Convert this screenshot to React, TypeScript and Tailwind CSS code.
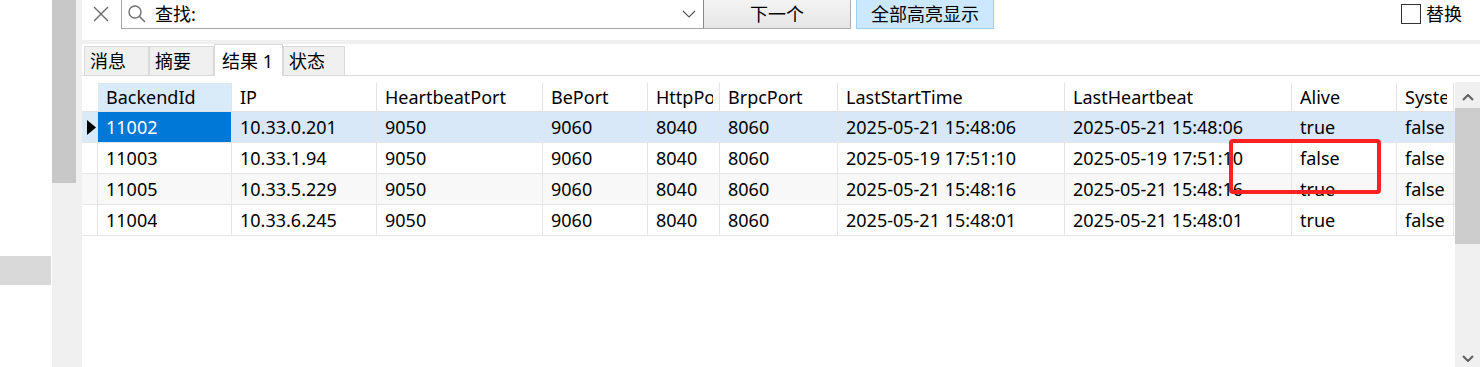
import React from 'react';

const cols = [
  { name: 'BackendId', w: 'w-[134px]' },
  { name: 'IP', w: 'w-[145px]' },
  { name: 'HeartbeatPort', w: 'w-[166px]' },
  { name: 'BePort', w: 'w-[105px]' },
  { name: 'HttpPort', w: 'w-[72px]' },
  { name: 'BrpcPort', w: 'w-[118px]' },
  { name: 'LastStartTime', w: 'w-[227px]' },
  { name: 'LastHeartbeat', w: 'w-[227px]' },
  { name: 'Alive', w: 'w-[105px]' },
  { name: 'SystemDecommissioned', w: 'w-[57px]' },
];

const rows = [
  ['11002', '10.33.0.201', '9050', '9060', '8040', '8060', '2025-05-21 15:48:06', '2025-05-21 15:48:06', 'true', 'false'],
  ['11003', '10.33.1.94', '9050', '9060', '8040', '8060', '2025-05-19 17:51:10', '2025-05-19 17:51:10', 'false', 'false'],
  ['11005', '10.33.5.229', '9050', '9060', '8040', '8060', '2025-05-21 15:48:16', '2025-05-21 15:48:16', 'true', 'false'],
  ['11004', '10.33.6.245', '9050', '9060', '8040', '8060', '2025-05-21 15:48:01', '2025-05-21 15:48:01', 'true', 'false'],
];

const tabs = [
  { label: '消息', w: 'w-[65px]' },
  { label: '摘要', w: 'w-[65px]' },
  { label: '结果 1', w: 'w-[69px]', active: true },
  { label: '状态', w: 'w-[62px]' },
];

export default function App() {
  return (
    <div className="relative flex h-[367px] w-[1480px] overflow-hidden bg-white font-['Noto_Sans','Noto_Sans_CJK_SC',sans-serif] text-[18px] text-black">
      {/* left blank column */}
      <div className="w-[52px] shrink-0">
        <div className="mt-[256px] h-[29px] w-[51px] bg-[#d9d9d9]" />
      </div>
      {/* left scroll strip */}
      <div className="w-[30px] shrink-0 bg-[#f0f0f0]">
        <div className="h-[183px] w-[24px] bg-[#c8c8c8]" />
      </div>

      {/* main */}
      <div className="flex min-w-0 flex-1 flex-col">
        {/* toolbar */}
        <div className="flex h-[40px] shrink-0 items-start">
          <div className="flex h-[28px] w-[39px] items-center pl-[11px]">
            <svg width="16" height="16" viewBox="0 0 16 16">
              <path d="M1 1 L15 15 M15 1 L1 15" stroke="#6b6b6b" strokeWidth="1.4" fill="none" />
            </svg>
          </div>
          <div className="flex h-[29px] w-[582px] items-center border-b border-l border-[#a6a6a6]">
            <svg width="20" height="20" viewBox="0 0 20 20" className="ml-[5px]">
              <circle cx="8" cy="8" r="6" stroke="#707070" strokeWidth="1.4" fill="none" />
              <path d="M12.3 12.3 L18 18" stroke="#707070" strokeWidth="1.6" fill="none" />
            </svg>
            <span className="ml-[8px] leading-[24px]">查找:</span>
            <div className="flex-1" />
            <svg width="14" height="8" viewBox="0 0 14 8" className="mr-[7px]">
              <path d="M1 1 L7 7 L13 1" stroke="#555" strokeWidth="1.1" fill="none" />
            </svg>
          </div>
          <div className="flex h-[29px] w-[148px] items-center justify-center border-x border-b border-x-[#8a8a8a] border-r-[#adadad] border-b-[#adadad] bg-linear-to-b from-[#f4f4f4] to-[#e6e6e6] leading-[24px]">
            下一个
          </div>
          <div className="ml-[5px] flex h-[29px] w-[138px] items-center justify-center border-x border-b border-[#99d1ff] bg-[#cce8ff] leading-[24px]">
            全部高亮显示
          </div>
          <div className="flex-1" />
          <div className="mr-[18px] mt-[3px] flex items-center">
            <div className="h-[20px] w-[20px] border border-[#333]" />
            <span className="ml-[5px] leading-[22px]">替换</span>
          </div>
        </div>
        <div className="h-[4px] shrink-0 bg-[#f0f0f0]" />

        {/* tabs */}
        <div className="flex h-[32px] shrink-0 items-end border-b border-[#d9d9d9] pl-[2px]">
          {tabs.map((t) =>
            t.active ? (
              <div
                key={t.label}
                className={`${t.w} -mb-px flex h-[32px] items-center border-x border-t border-[#d9d9d9] bg-white pl-[7px] leading-[24px]`}
              >
                {t.label}
              </div>
            ) : (
              <div
                key={t.label}
                className={`${t.w} flex h-[29px] items-center border border-b-0 border-[#d9d9d9] bg-[#f0f0f0] pl-[5px] leading-[24px]`}
              >
                {t.label}
              </div>
            )
          )}
        </div>

        {/* grid area */}
        <div className="flex min-h-0 flex-1">
          <div className="mt-[7px] flex-1">
            {/* header */}
            <div className="flex h-[29px] border-b border-[#e0e0e0]">
              <div className="w-[16px] shrink-0" />
              {cols.map((c, i) => (
                <div
                  key={c.name}
                  className={`${c.w} flex shrink-0 items-center border-r border-[#e3e3e3] pl-[8px] pr-[6px] ${
                    i === 0 ? 'bg-[#d9eaf9]' : ''
                  }`}
                >
                  <span className="block overflow-hidden whitespace-nowrap leading-[26px]">{c.name}</span>
                </div>
              ))}
            </div>
            {rows.map((r, ri) => (
              <div
                key={ri}
                className={`flex h-[31px] border-b border-[#e6e6e6] ${
                  ri === 0 ? 'bg-[#d9e8f8]' : ri === 2 ? 'bg-[#f8f8f8]' : 'bg-white'
                }`}
              >
                <div
                  className={`flex w-[16px] shrink-0 items-center border-r border-[#e3e3e3] pl-[5px] ${
                    ri === 0 ? 'bg-[#d9eaf9]' : ''
                  }`}
                >
                  {ri === 0 && (
                    <svg width="9" height="15" viewBox="0 0 9 15">
                      <polygon points="0,0 9,7.5 0,15" fill="#000" />
                    </svg>
                  )}
                </div>
                {r.map((v, ci) => (
                  <div
                    key={ci}
                    className={`${cols[ci].w} flex shrink-0 items-center border-r border-[#e6e6e6] pl-[8px] pr-[6px] ${
                      ri === 0 && ci === 0 ? 'bg-[#0078d7] text-white' : ''
                    }`}
                  >
                    <span className="block overflow-hidden whitespace-nowrap leading-[26px]">{v}</span>
                  </div>
                ))}
              </div>
            ))}
          </div>
          {/* right scrollbar */}
          <div className="mt-[6px] flex w-[25px] shrink-0 flex-col bg-[#f0f0f0]">
            <div className="flex h-[26px] items-center justify-center pt-[5px]">
              <svg width="12" height="7" viewBox="0 0 12 7">
                <path d="M1 6 L6 1 L11 6" stroke="#606060" strokeWidth="2" fill="none" />
              </svg>
            </div>
            <div className="h-[136px] bg-[#cdcdcd]" />
            <div className="flex-1" />
            <div className="flex h-[26px] justify-center pt-[14px]">
              <svg width="12" height="7" viewBox="0 0 12 7">
                <path d="M1 1 L6 6 L11 1" stroke="#606060" strokeWidth="2" fill="none" />
              </svg>
            </div>
          </div>
        </div>
      </div>

      {/* red annotation */}
      <div className="absolute left-[1229px] top-[139px] h-[55px] w-[152px] rounded-[4px] border-4 border-[#ff2020]" />
    </div>
  );
}
